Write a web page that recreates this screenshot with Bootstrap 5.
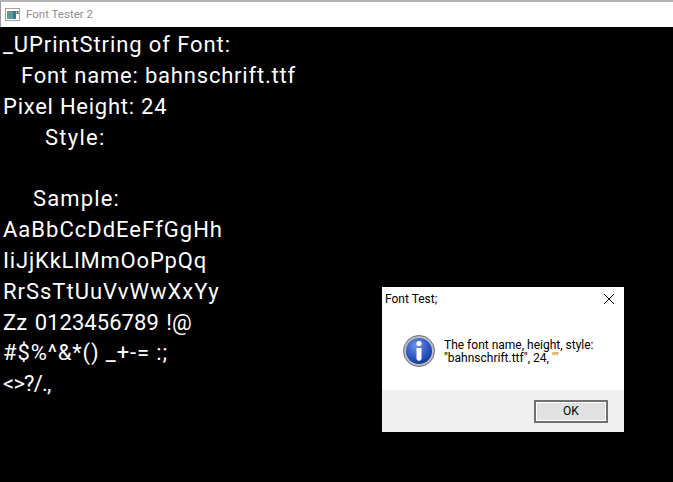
<!DOCTYPE html>
<html lang="en">
<head>
<meta charset="utf-8">
<title>Font Tester 2</title>
<link rel="stylesheet" href="https://cdn.jsdelivr.net/npm/bootstrap@5.3.0/dist/css/bootstrap.min.css">
<style>
html,body{height:482px;overflow:hidden;background:#000}
.win-root{width:673px;height:482px;background:#fff;border-top:2px solid #b4b4b4;position:relative}
.win-title{height:25px;padding-left:4px;gap:6px;font:11.5px/25px Roboto,sans-serif;color:#8f8f8f;border-left:1px solid #9a9a9a}
.win-body{background:#000;height:455px;color:#fff;padding-left:3px;padding-top:3px;font-family:Roboto,sans-serif;font-size:22px;font-weight:400}
.txt-line{height:30.85px;line-height:30.85px;white-space:pre}
.l1{letter-spacing:.9px}.l2{letter-spacing:.8px;padding-left:18px}.l3{letter-spacing:.75px}.l4{letter-spacing:1.25px;padding-left:42px}
.l6{letter-spacing:1.13px;padding-left:30px}.l7{letter-spacing:1px}.l8{letter-spacing:.82px}.l9{letter-spacing:.98px}.l10{letter-spacing:.05px;word-spacing:2px}.l11{letter-spacing:.87px}.l12{letter-spacing:-.8px}
.dlg{position:absolute;left:382px;top:285px;width:242px;height:145px;background:#fff;color:#000;font:12px/13px Roboto,sans-serif}
.dlg-head{height:24px;padding-left:3px;line-height:24px}
.dlg-close{width:10px;height:10px;margin-right:10px}
.dlg-main{height:79px;padding-left:21px;gap:9px}
.dlg-msg{padding-top:3px}
.dlg-foot{height:42px;background:#f0f0f0;padding-right:16px;padding-top:10px}
.dlg-ok{width:74px;height:23px;padding:0;border:2px solid #707070;border-radius:0;background:#e1e1e1;color:#000;font:12px/17px Roboto,sans-serif;box-shadow:inset 0 0 0 1px #fff}
.q{color:#c08000}
</style>
</head>
<body>
<div class="win-root">
  <div class="win-title d-flex align-items-center">
    <svg width="15" height="13" viewBox="0 0 15 13"><rect x=".5" y=".5" width="14" height="12" fill="#fff" stroke="#a0a4a8"/><rect x="2" y="3" width="6" height="8" fill="#5f9a88"/><rect x="8" y="3" width="3" height="8" fill="#3f6f9f"/><rect x="11.5" y="3" width="2" height="3" fill="#44688c"/></svg>
    <span>Font Tester 2</span>
  </div>
  <div class="win-body">
    <div class="txt-line l1">_UPrintString of Font:</div>
    <div class="txt-line l2">Font name: bahnschrift.ttf</div>
    <div class="txt-line l3">Pixel Height: 24</div>
    <div class="txt-line l4">Style:</div>
    <div class="txt-line"> </div>
    <div class="txt-line l6">Sample:</div>
    <div class="txt-line l7">AaBbCcDdEeFfGgHh</div>
    <div class="txt-line l8">IiJjKkLlMmOoPpQq</div>
    <div class="txt-line l9">RrSsTtUuVvWwXxYy</div>
    <div class="txt-line l10">Zz 0123456789 !@</div>
    <div class="txt-line l11">#$%^&amp;*() _+-= :;</div>
    <div class="txt-line l12">&lt;&gt;?/.,</div>
  </div>
  <div class="dlg">
    <div class="dlg-head d-flex justify-content-between align-items-center">
      <span>Font Test;</span>
      <svg class="dlg-close" viewBox="0 0 10 10"><path d="M0 0L10 10M10 0L0 10" stroke="#000" stroke-width="1" fill="none"/></svg>
    </div>
    <div class="dlg-main d-flex align-items-center">
      <svg width="32" height="32" viewBox="0 0 32 32">
        <defs><radialGradient id="bg" cx=".4" cy=".3" r=".8"><stop offset="0" stop-color="#6f95ea"/><stop offset=".6" stop-color="#2a55c0"/><stop offset="1" stop-color="#12307f"/></radialGradient></defs>
        <circle cx="16" cy="16" r="15.5" fill="#b9bec6" stroke="#6c7078"/>
        <circle cx="16" cy="16" r="13" fill="url(#bg)"/>
        <circle cx="16" cy="8.5" r="2.6" fill="#fff"/>
        <path d="M13.5 13h5v10.5q0 1.5 -2.5 2.5q-2.5 -1 -2.5 -2.5z" fill="#fff"/>
      </svg>
      <div class="dlg-msg">The font name, height, style:<br>"bahnschrift.ttf", 24, <span class="q">""</span></div>
    </div>
    <div class="dlg-foot d-flex justify-content-end align-items-start">
      <button type="button" class="btn dlg-ok">OK</button>
    </div>
  </div>
</div>
</body>
</html>
